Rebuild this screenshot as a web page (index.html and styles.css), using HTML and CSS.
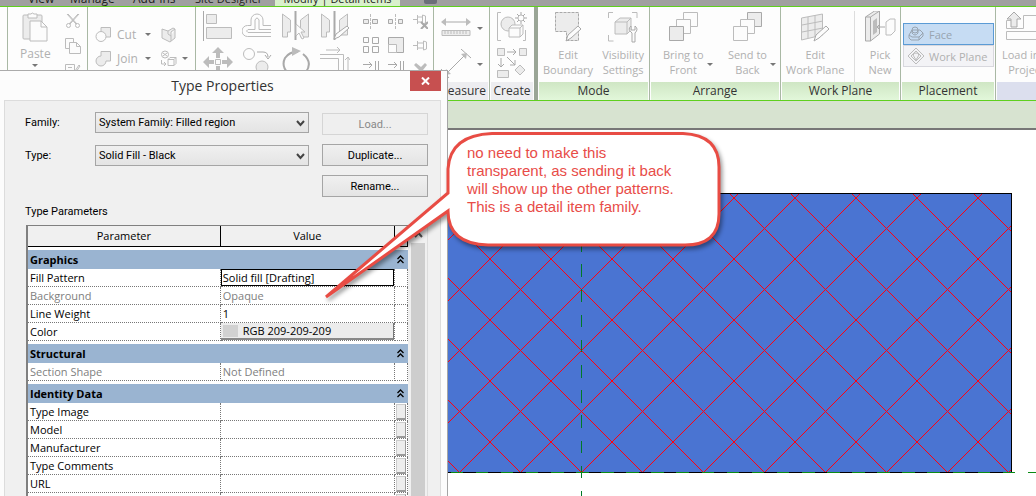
FILE: index.html
```html
<!DOCTYPE html>
<html lang="en">
<head>
<meta charset="utf-8">
<title>Type Properties</title>
<link rel="stylesheet" href="styles.css">
</head>
<body>
<nav class="tabs">
  <div class="tabs-row">
    <a class="tab tab-view" href="#">View</a>
    <a class="tab tab-manage" href="#">Manage</a>
    <a class="tab tab-addins" href="#">Add-Ins</a>
    <a class="tab tab-site" href="#">Site Designer</a>
    <a class="tab tab-active" href="#">Modify | Detail Items</a>
    <button class="tab-menu" aria-label="Ribbon display"></button>
  </div>
</nav>

<header class="ribbon">
  <section class="panel p-select"><div class="body"></div><h2></h2></section>
  <section class="panel p-clip">
    <div class="body">
      <button class="tool paste">
        <svg width="28" height="32" viewBox="0 0 28 32" class="ico"><rect x="2" y="4" width="19" height="24" rx="1" class="f"/><path d="M7 7V3h3q1-2 3 0h3v4z" class="w"/><path d="M9 10h11l6 6v14H9z" class="w"/><path d="M20 10v6h6"/></svg>
        <span>Paste</span><i class="drop"></i>
      </button>
      <div class="stack">
        <button aria-label="Cut"><svg width="16" height="16" viewBox="0 0 16 16" class="ico"><path d="M2 1l9 10M14 1L5 11M3 1l9 10M13 1L4 11"/><circle cx="3.500" cy="12.500" r="2"/><circle cx="12.500" cy="12.500" r="2"/></svg></button>
        <button aria-label="Copy"><svg width="16" height="16" viewBox="0 0 16 16" class="ico"><path d="M.5.500h8v10h-8z" class="w"/><path d="M4.500 4.500h7l4 4v7h-11z" class="w"/><path d="M11.500 4.500v4h4"/></svg></button>
        <button aria-label="Match type"><svg width="16" height="16" viewBox="0 0 16 16" class="ico"><path d="M.5 1.500h9v13h-9zM3 4.500h4M3 7.500h4M8 11l6-9 1 1-6 9z" class="w"/></svg></button>
      </div>
    </div><h2></h2>
  </section>
  <section class="panel p-geom">
    <div class="body">
      <button class="row"><svg width="17" height="17" viewBox="0 0 17 17" class="ico"><path d="M6 1.500h9.500V11H6z" class="f"/><circle cx="6" cy="10.500" r="5" class="w"/></svg><span>Cut</span><i class="drop"></i></button>
      <button aria-label="Cope"><svg width="17" height="17" viewBox="0 0 17 17" class="ico"><path d="M2 3l6 2 5-3 2 1v9l-5 4-8-4zM8 5v3l3 2v5M15 3l-4 3v4" class="f"/></svg></button>
      <button class="row"><svg width="17" height="17" viewBox="0 0 17 17" class="ico"><path d="M6 6V1.500h9.500V11H11a5 5 0 1 1-5-5z" class="f"/></svg><span>Join</span><i class="drop"></i></button>
      <button class="row"><svg width="17" height="17" viewBox="0 0 17 17" class="ico"><circle cx="5" cy="4.500" r="3.500"/><path d="M3 3l4 3M7 3L3 6M1.500 10v4h4M4 12l2 2-2 2M8 9.500l2-2h6v6l-2 2H8zM8 9.500h6v6M14 9.500l2-2"/></svg><i class="drop"></i></button>
    </div><h2></h2>
  </section>
  <section class="panel p-modify">
    <div class="body">
      <div class="big">
        <button aria-label="Align"><svg width="30" height="30" viewBox="0 0 30 30" class="ico"><path d="M.5 0v30" class="d"/><path d="M3.500 3.500h10v9h-10zM3.500 16.500h25v11h-25z" class="f"/></svg></button>
        <button aria-label="Offset"><svg width="30" height="30" viewBox="0 0 30 30" class="ico"><path d="M29 25.500H5.500a5 5 0 0 1 0-11H9V9a6 6 0 0 1 12 0v5.500h8M29 21.500H6q-3-1.500 0-3h7V9q2-4 4 0v9.500h12"/></svg></button>
        <button aria-label="Mirror by axis"><svg width="30" height="30" viewBox="0 0 30 30" class="ico"><path d="M1.500 3l8 6v12h-3v5h-5zM27.500 3l-8 6v17h8z" class="f"/><path d="M14.500 0v29" class="d thick"/><path d="M15 13l9 8h-4l3 6-2 1-3-6-3 3z" class="w"/></svg></button>
        <button aria-label="Mirror by line"><svg width="30" height="30" viewBox="0 0 30 30" class="ico"><path d="M1.500 3l8 6v12h-3v5h-5zM27.500 3l-8 6v15h8z" class="f"/><path d="M14.500 0v29" class="d thick"/><path d="M14 28l2-5 11-8 2 2-10 9z" class="w d"/></svg></button>
        <button aria-label="Move"><svg width="30" height="30" viewBox="0 0 30 30" class="ico"><path d="M15 0l6 6h-4v5h-4V6H9zM0 15l6-6v4h5v4H6v4zM30 15l-6-6v4h-5v4h5v4zM15 30l6-6h-4v-5h-4v5H9z" class="s"/><path d="M12.500 12.500h5v5h-5z" class="w"/></svg></button>
        <button aria-label="Copy element"><svg width="30" height="30" viewBox="0 0 30 30" class="ico"><circle cx="7" cy="7" r="5.500"/><circle cx="20" cy="20" r="6" class="f"/><path d="M15 5h6q5 0 5 5M23 8l3 4 3-4" class="d"/></svg></button>
        <button aria-label="Rotate"><svg width="30" height="30" viewBox="0 0 30 30" class="ico"><path d="M7 26Q0 19 4 11q5-7 13-6M22 7q10 8 3 18" class="d thick"/><path d="M11 0l9 4-9 5z" class="s"/></svg></button>
        <button aria-label="Trim"><svg width="30" height="30" viewBox="0 0 30 30" class="ico"><path d="M0 7.500h23.500V30M0 11.500h18.500V30M6 3h14M17 0l3 3-3 3M28 30V10M25 13l3-3 2 3"/></svg></button>
      </div>
      <div class="small">
        <button aria-label="Split"><svg width="15" height="15" viewBox="0 0 15 15" class="ico"><path d="M.5 5.500h5v4h-5zM9.500 5.500h5v4h-5z" class="f d"/><path d="M7.500 0v15" class="dash"/></svg></button>
        <button aria-label="Split with gap"><svg width="15" height="15" viewBox="0 0 15 15" class="ico"><path d="M.5 5.500h4v4h-4zM10.500 5.500h4v4h-4z" class="f d"/><path d="M7.500 0v15" class="dash"/></svg></button>
        <button aria-label="Unpin"><svg width="15" height="15" viewBox="0 0 15 15" class="ico"><path d="M0 5.500h4M4.500 1v9M5 3h4M5 8h4M9.500 1v9l3-1V2z"/><path d="M8 8l7 7M15 8l-7 7" class="d thick"/></svg></button>
        <button aria-label="Array"><svg width="16" height="16" viewBox="0 0 16 16" class="ico"><path d="M.5.500h5v5h-5zM9.500.500h6v6h-6zM.5 9.500h5v6h-5zM9.500 9.500h6v6h-6z" class="w d"/></svg></button>
        <button aria-label="Scale"><svg width="16" height="16" viewBox="0 0 16 16" class="ico"><path d="M.5.500h15v15h-15z" class="f d"/><path d="M.5 7.500h8v8h-8z" class="w"/></svg></button>
        <button aria-label="Pin"><svg width="15" height="15" viewBox="0 0 15 15" class="ico"><path d="M0 7.500h4M4.500 3v9M5 5h5M5 10h5M10.500 3v9l3-1V4z"/></svg></button>
        <button aria-label="Extend"><svg width="16" height="16" viewBox="0 0 16 16" class="ico"><path d="M0 3.500h9M6 1l3 3-3 3M12.500 0v16M15.500 0v16M1 9.500h9" class="d"/></svg></button>
        <button aria-label="Extend many"><svg width="16" height="16" viewBox="0 0 16 16" class="ico"><path d="M0 3.500h9M6 1l3 3-3 3M12.500 0v16M15.500 0v16M0 9.500h9" class="d"/></svg></button>
        <button aria-label="Delete"><svg width="15" height="15" viewBox="0 0 15 15" class="ico"><path d="M1 3l2-2 5 4 4-4 2 2-4 5 4 5-2 2-4-5-5 5-2-2 5-5z" class="s"/></svg></button>
      </div>
    </div><h2></h2>
  </section>
  <section class="panel p-measure">
    <div class="body">
      <button class="row"><svg width="31" height="20" viewBox="0 0 31 20" class="ico"><path d="M2 4h26" class="d"/><path d="M0 4l5-4v8zM30 4l-5-4v8z" class="s"/><path d="M1 12.500h28v5H1zM4 13v3M7 13v3M10 13v3M13 13v3M16 13v3M19 13v3M22 13v3M25 13v3" class="f"/></svg><i class="drop"></i></button>
      <button class="row"><svg width="31" height="30" viewBox="0 0 31 30" class="ico"><path d="M5 25L25 5M20 0l10 9M0 20l8 9" class="d"/><path d="M26 4l-6 1 5 5zM4 26l1-6 5 5z" class="s"/></svg><i class="drop"></i></button>
    </div><h2>Measure</h2>
  </section>
  <section class="panel p-create">
    <div class="body">
      <button aria-label="Create group"><svg width="30" height="30" viewBox="0 0 30 30" class="ico"><path d="M4 .5H.5v28H4M26 28.500h2.500V18"/><circle cx="11" cy="12" r="7" class="f"/><path d="M12 16l3-3h11v9l-3 3H12zM12 16h11v9M23 16l3-3" class="w"/><circle cx="24" cy="6" r="3"/><path d="M24 0v3M24 9v3M18 6h3M27 6h3M20 2l2 2M26 8l2 2M28 2l-2 2M22 8l-2 2" class="d"/></svg></button>
      <button aria-label="Create similar"><svg width="30" height="32" viewBox="0 0 30 32" class="ico"><path d="M.5 1.500h7v7h-7zM22.500 1.500h7v7h-7zM.5 23.500h11v7H.5zM23 18l5 5-5 5-5-5z" class="f"/><path d="M10 5h9M16 2l3 3-3 3M4 11v9M1 17l3 3 3-3M10 10l8 8M18 13v5h-5" class="d"/></svg></button>
    </div><h2>Create</h2>
  </section>
  <section class="panel ctx p-mode">
    <div class="body">
      <button class="tool"><svg width="28" height="32" viewBox="0 0 28 32" class="ico"><path d="M1.500 1.500h23v28h-12v-9h-11z" class="f d dash"/><path d="M12 30l2-6 10-9 3 3-10 9z" class="w d"/></svg><span>Edit<br>Boundary</span></button>
      <button class="tool"><svg width="32" height="32" viewBox="0 0 32 32" class="ico"><path d="M6 1.500H1.500V7M25 1.500h5V7M1.500 24v6h5"/><path d="M8 11l5-4h11v12l-4 4H8zM8 11h12v12M20 11l4-4" class="f"/><path d="M25 31V22q-5-4-1-7v4h4v-4q4 3 0 7v9z" class="w d"/></svg><span>Visibility<br>Settings</span></button>
    </div><h2>Mode</h2>
  </section>
  <section class="panel ctx p-arrange">
    <div class="body">
      <button class="tool"><svg width="30" height="32" viewBox="0 0 30 32" class="ico"><path d="M15.500 1.500h14v14h-14z" class="w"/><path d="M8.500 8.500h14v14h-14z" class="w"/><path d="M1.500 15.500h14v14h-14z" class="f d"/></svg><span>Bring to<br>Front</span><i class="drop side"></i></button>
      <button class="tool"><svg width="30" height="32" viewBox="0 0 30 32" class="ico"><path d="M15.500 1.500h14v14h-14z" class="f d"/><path d="M8.500 8.500h14v14h-14z" class="w"/><path d="M1.500 15.500h14v14h-14z" class="w"/></svg><span>Send to<br>Back</span><i class="drop side"></i></button>
    </div><h2>Arrange</h2>
  </section>
  <section class="panel ctx p-plane">
    <div class="body">
      <button class="tool"><svg width="30" height="32" viewBox="0 0 30 32" class="ico"><path d="M1.500 7l21-4v21l-21 5zM8 6v21M15 4v22M2 14l21-4M2 21l21-4" class="f"/><path d="M14 30l2-6 10-9 3 3-10 9z" class="w d"/></svg><span>Edit<br>Work Plane</span></button>
      <button class="tool pick"><svg width="32" height="32" viewBox="0 0 32 32" class="ico"><path d="M1.500 6l9-6h5v23l-9 7h-5zM1.500 6h5v24M6.500 6l9-6" class="f d"/><path d="M9 10l4-3v14l-4 3z" class="s"/><path d="M22 11l4-3h5v12l-4 4h-5z" class="w"/><path d="M13 16h8M16 13l-3 3 3 3" class="d"/></svg><span>Pick<br>New</span></button>
    </div><h2>Work Plane</h2>
  </section>
  <section class="panel ctx p-place">
    <div class="body">
      <button class="choice on"><svg width="16" height="16" viewBox="0 0 16 16" class="ico"><path d="M1 9l3-5h8l3 3v3l-4 4H3l-2-2zM1 9l3 2h7l4-4M11 11v3M4 4v3q3 4 6 0V4"/><circle cx="7" cy="4" r="3"/></svg>Face</button>
      <button class="choice"><svg width="16" height="16" viewBox="0 0 16 16" class="ico"><path d="M8 0l8 8-8 8-8-8zM8 3l5 5-5 5-5-5zM5 7q3-4 6 0l-3 5z"/></svg>Work Plane</button>
    </div><h2>Placement</h2>
  </section>
  <section class="panel p-load">
    <div class="body">
      <button class="tool"><svg width="40" height="32" viewBox="0 0 40 32" class="ico"><path d="M5 9.500H.5v8h17v-13H40M40 20.500H.5v8H40"/><path d="M8 1l7 7h-4v8H5V8H1z" class="f d"/></svg><span>Load into<br>Project</span></button>
    </div><h2></h2>
  </section>
</header>

<div class="options"></div>

<main class="canvas">
  <svg class="drawing" width="100%" height="100%">
    <defs>
      <pattern id="hatch" x="581" y="159" width="61" height="61" patternUnits="userSpaceOnUse">
        <path d="M-1-1L62 62M63-1L-1 63M-1 2L2-1" stroke="#ff0010" fill="none"/>
      </pattern>
    </defs>
    <rect x="440" y="63" width="572" height="279" fill="#4a74d2"/>
    <rect x="440.500" y="63.500" width="571" height="279" fill="url(#hatch)" stroke="#000"/>
    <path d="M581.500 109V400" stroke="#007a28" stroke-dasharray="12.500 12.700"/>
    <path d="M450.500 342.500H1100" stroke="#0a8a14" stroke-dasharray="12.600 12.500"/>
  </svg>
</main>

<section class="dialog" aria-label="Type Properties">
  <div class="titlebar">
    <h1>Type Properties</h1>
    <button class="close" aria-label="Close"><svg width="9" height="8" viewBox="0 0 9 8"><path d="M1 .5l7 7M8 .5l-7 7" stroke="#fff" stroke-width="2"/></svg></button>
  </div>
  <div class="content">
    <div class="form">
      <div class="fields">
        <label for="family">Family:</label>
        <span class="selectbox"><select id="family"><option>System Family: Filled region</option></select><svg width="9" height="7" viewBox="0 0 9 7"><path d="M1 1l3.500 4L8 1" fill="none" stroke="#444" stroke-width="2"/></svg></span>
        <label for="type">Type:</label>
        <span class="selectbox"><select id="type"><option>Solid Fill - Black</option></select><svg width="9" height="7" viewBox="0 0 9 7"><path d="M1 1l3.500 4L8 1" fill="none" stroke="#444" stroke-width="2"/></svg></span>
      </div>
      <div class="actions">
        <button disabled>Load...</button>
        <button>Duplicate...</button>
        <button>Rename...</button>
      </div>
    </div>
    <p class="caption">Type Parameters</p>
    <div class="tablebox">
      <table>
        <colgroup><col class="c1"><col class="c2"><col class="c3"></colgroup>
        <thead><tr><th>Parameter</th><th>Value</th><th></th></tr></thead>
        <tbody>
          <tr class="gap"><td colspan="3"></td></tr>
          <tr class="group"><th colspan="2">Graphics</th><th><svg width="7" height="9" viewBox="0 0 7 9"><path d="M.5 4l3-3 3 3M.5 8l3-3 3 3" fill="none" stroke="#000" stroke-width="1.300"/></svg></th></tr>
          <tr><td>Fill Pattern</td><td class="edit"><input aria-label="Fill Pattern" value="Solid fill [Drafting]"></td><td></td></tr>
          <tr class="dim"><td>Background</td><td>Opaque</td><td></td></tr>
          <tr><td>Line Weight</td><td>1</td><td></td></tr>
          <tr><td>Color</td><td class="edit"><button class="color"><i></i>RGB 209-209-209</button></td><td></td></tr>
          <tr class="gap"><td colspan="3"></td></tr>
          <tr class="group"><th colspan="2">Structural</th><th><svg width="7" height="9" viewBox="0 0 7 9"><path d="M.5 4l3-3 3 3M.5 8l3-3 3 3" fill="none" stroke="#000" stroke-width="1.300"/></svg></th></tr>
          <tr class="dim"><td>Section Shape</td><td>Not Defined</td><td></td></tr>
          <tr class="gap"><td colspan="3"></td></tr>
          <tr class="group"><th colspan="2">Identity Data</th><th><svg width="7" height="9" viewBox="0 0 7 9"><path d="M.5 4l3-3 3 3M.5 8l3-3 3 3" fill="none" stroke="#000" stroke-width="1.300"/></svg></th></tr>
          <tr><td>Type Image</td><td></td><td class="edit"><button class="link" aria-label="Type Image"></button></td></tr>
          <tr><td>Model</td><td></td><td class="edit"><button class="link" aria-label="Model"></button></td></tr>
          <tr><td>Manufacturer</td><td></td><td class="edit"><button class="link" aria-label="Manufacturer"></button></td></tr>
          <tr><td>Type Comments</td><td></td><td class="edit"><button class="link" aria-label="Type Comments"></button></td></tr>
          <tr><td>URL</td><td></td><td class="edit"><button class="link" aria-label="URL"></button></td></tr>
          <tr><td></td><td></td><td class="edit"><button class="link" aria-label="More"></button></td></tr>
        </tbody>
      </table>
      <div class="scroll"><svg width="9" height="6" viewBox="0 0 9 6"><path d="M1 5l3.500-4L8 5" fill="none" stroke="#555" stroke-width="2"/></svg><div class="thumb"></div></div>
    </div>
  </div>
</section>

<aside class="callout">
  <svg class="bubble" width="410" height="180" viewBox="0 0 410 180"><path d="M172 5.500H363Q399 7 399 39V86Q399 118 363 117H168Q128 116 128 83L6 169 128 65V41Q130 7 172 5.500Z"/></svg>
  <p>no need to make this<br>transparent, as sending it back<br>will show up the other patterns.<br>This is a detail item family.</p>
</aside>
</body>
</html>
```
FILE: styles.css
```css
* { box-sizing: border-box; }
html, body { height: 100%; }
body {
  margin: 0;
  display: flex;
  flex-direction: column;
  overflow: hidden;
  position: relative;
  background: #fff;
  color: #1e1e1e;
  font-family: "Open Sans", "Noto Sans", sans-serif;
  font-size: 11px;
}
button { font: inherit; color: inherit; border: 0; padding: 0; margin: 0; background: none; }
h1, h2, p { margin: 0; font-weight: normal; }

/* tab strip, scrolled mostly out of view */
.tabs { height: 6px; flex: none; display: flex; align-items: flex-end; background: #a0a0a0; overflow: hidden; }
.tabs-row { display: flex; align-items: flex-end; height: 20px; flex: none; }
.tab { color: #222; text-decoration: none; line-height: 26px; height: 20px; white-space: nowrap; font-size: 12px; }
.tab-view { width: 42px; margin-left: 28px; }
.tab-manage { width: 63px; }
.tab-addins { width: 62px; }
.tab-site { width: 80px; font-size: 11px; }
.tab-active { width: 125px; text-align: center; background: #d9f0cc; font-size: 11px; }
.tab-menu { width: 13px; height: 6px; margin: 0 0 2px 24px; background: #6b6e78; border-radius: 2px; }

/* ribbon */
.ribbon {
  flex: none;
  display: flex;
  height: 95px;
  border-top: 1px solid #5fd01e;
  border-bottom: 1px solid #5fd01e;
  background: #fdfdfd;
  overflow: hidden;
}
.panel { flex: none; display: flex; flex-direction: column; border-right: 1px solid #a9b8a4; overflow: hidden; }
.panel .body { flex: 1; min-height: 0; display: flex; color: #b0b0b0; }
.panel h2 { height: 18px; margin: 0 1px; line-height: 18px; font-size: 12px; text-align: center; background: #ededf0; color: #333; white-space: nowrap; }
.panel.ctx h2 { background: linear-gradient(#cfe6c4, #e2f7da); }
.p-select { width: 8px; }
.p-clip { width: 80px; }
.p-geom { width: 108px; }
.p-modify { width: 238px; }
.p-measure { width: 56px; }
.p-create { width: 48px; border-right: 4px solid #9aa596; }
.p-mode { width: 112px; }
.p-arrange { width: 131px; }
.p-plane { width: 120px; }
.p-place { width: 95px; }
.p-load { flex: 1 0 41px; border: 0; }
.panel.p-load h2 { background: #dcdfee; margin-right: 0; }

.ico { display: block; fill: none; stroke: #bcbcbc; }
.ico .f { fill: #ececec; }
.ico .w { fill: #fcfcfc; }
.ico .s { fill: #bcbcbc; stroke: none; }
.ico .d { stroke: #a9a9a9; }
.ico .thick { stroke-width: 2; }
.ico .dash { stroke-dasharray: 3 1; }
.drop { width: 0; height: 0; flex: none; border: 3px solid transparent; border-top-color: #777; border-bottom: 0; }

.tool { position: relative; display: flex; flex-direction: column; align-items: center; line-height: 15px; }
.tool span { white-space: nowrap; }
.tool .side { position: absolute; right: -9px; bottom: 18px; }
.p-mode .body, .p-arrange .body, .p-plane .body { padding: 4px 5px 0; justify-content: space-between; }
.p-arrange .body { padding: 4px 13px 0 13px; }
.p-plane .body { padding: 4px 4px 0 5px; }
.p-arrange .tool:last-child { margin-right: 0; }
.p-mode .tool, .p-arrange .tool, .p-plane .tool, .p-load .tool { height: 73px; gap: 4px; }
.p-plane .pick { padding-left: 9px; border-left: 1px solid #ddd; }
.p-load .body { padding: 4px 0 0 6px; }

.p-clip .body { padding: 4px 6px 0 12px; justify-content: space-between; }
.paste { height: 60px; gap: 3px; font-size: 12px; }
.stack { display: flex; flex-direction: column; gap: 9px; padding: 2px 0; }
.p-geom .body { display: grid; grid-template-columns: 56px 28px; grid-template-rows: 17px 17px; gap: 7px 9px; padding: 19px 0 0 7px; font-size: 12px; }
.row { display: flex; align-items: center; gap: 5px; }
.row .drop { margin-left: auto; }
.p-modify .body { padding: 4px 6px 0 7px; gap: 13px; }
.big { display: grid; grid-template-columns: repeat(4, 30px); grid-template-rows: 30px 30px; gap: 6px 9px; }
.small { display: grid; grid-template-columns: repeat(3, 16px); grid-template-rows: 16px 16px 16px; gap: 8px 9px; padding-top: 2px; }
.p-measure .body { flex-direction: column; gap: 11px; padding: 11px 6px 0 7px; }
.p-create .body { flex-direction: column; gap: 5px; padding: 5px 0 0 7px; }
.p-place .body { flex-direction: column; padding: 16px 1px 0 2px; }
.choice { display: flex; align-items: center; gap: 5px; height: 22px; padding-left: 4px; white-space: nowrap; border: 1px solid #d8d8de; background: #f3f3f6; }
.choice.on { background: #c6dcf3; border-color: #5b9bd5; color: #98a4b0; }
.choice.on .ico { stroke: #98a4b0; }

.options { flex: none; height: 29px; background: #d7e3d0; border-bottom: 2px solid #777; }
.canvas { flex: 1; min-height: 0; }
.drawing { display: block; }
.drawing path { shape-rendering: crispEdges; }

/* dialog window */
.dialog { position: absolute; left: 0; top: 70px; bottom: 0; width: 448px; overflow: hidden; background: #fcfcfc; border-top: 1px solid #aaa; border-right: 1px solid #a5a5a5; color: #000; }
.titlebar { display: flex; align-items: flex-start; height: 29px; padding-right: 6px; }
.titlebar h1 { flex: 1; padding-left: 35px; text-align: center; font-size: 14px; line-height: 30px; color: #333; }
.close { width: 31px; height: 20px; display: flex; align-items: center; justify-content: center; background: #c75050; }
.content { margin: 0 6px 0 4px; height: 500px; padding: 11px 12px 0 20px; background: #f0f0f0; border: 1px solid #dcdcdc; }
.form, .caption { font-family: Roboto, "Liberation Sans", sans-serif; }
.form { display: flex; justify-content: space-between; }
.fields { display: grid; grid-template-columns: 70px 214px; grid-template-rows: 21px 21px; row-gap: 12px; }
.fields label { line-height: 22px; }
.selectbox { position: relative; display: block; }
.selectbox svg { position: absolute; right: 4px; top: 8px; }
select { appearance: none; width: 100%; height: 21px; padding: 0; font: inherit; color: #000; text-indent: 3px; border: 1px solid #a5a5a5; border-radius: 0; background: linear-gradient(#f0f0f0, #e4e4e4); }
.actions { display: flex; flex-direction: column; gap: 9px; width: 106px; padding-top: 1px; }
.actions button { height: 22px; border: 1px solid #a5a5a5; background: linear-gradient(#f0f0f0, #e4e4e4); }
.actions button:disabled { color: #888; border-color: #d5d5d5; background: #efefef; }
.caption { margin-top: 5px; line-height: 20px; }
.tablebox { display: flex; margin: 3px 0 0 1px; width: 402px; border: 1px solid #808080; border-width: 1px 1px 0 2px; border-right-color: #ddd; }
table { flex: 1; border-collapse: separate; border-spacing: 0; table-layout: fixed; background: #fff; }
.c1 { width: 194px; }
.c2 { width: 175px; }
.c3 { width: 12px; }
td, th { height: 18px; padding: 0 2px; line-height: 16px; text-align: left; font-weight: normal; white-space: nowrap; border-right: 1px dotted #777; border-bottom: 1px dotted #777; }
thead th { height: 21px; text-align: center; background: #f0f0f0; border-right: 1px solid #000; border-bottom: 1px solid #000; }
.gap td { height: 3px; line-height: 0; border: 0; }
.group th { height: 19px; font-weight: bold; background: #9ab4d1; border: 0; }
.group th svg { display: block; }
.dim td { color: #808080; }
td.edit { padding: 0; }
input { display: block; width: 100%; height: 17px; padding: 0 1px; font: inherit; border: 1px solid #000; border-radius: 0; background: #fff; }
.color { display: flex; align-items: center; gap: 5px; width: 100%; height: 17px; padding-left: 2px; background: #ececec; border-right: 1px solid #777; border-bottom: 2px solid #888; }
.color i { width: 15px; height: 12px; background: #d1d1d1; }
.link { display: block; width: 10px; height: 16px; margin: 0 1px; background: #ededed; border: 1px solid #ccc; border-right-color: #999; border-bottom: 2px solid #999; }
.scroll { flex: none; width: 19px; padding: 6px 2px 0 3px; display: flex; flex-direction: column; align-items: center; gap: 5px; background: #f0f0f0; }
.thumb { width: 14px; flex: 1; background: #cdcdcd; }

/* annotation */
.callout { position: absolute; left: 320px; top: 128px; color: #e84c48; font: 15px/18px "Liberation Sans", Arial, sans-serif; }
.bubble { position: absolute; left: 0; top: 0; fill: #fff; stroke: #e84c44; stroke-width: 3; filter: drop-shadow(2px 3px 2px #0006); }
.callout p { position: relative; padding: 16px 0 0 147px; white-space: nowrap; }
```
